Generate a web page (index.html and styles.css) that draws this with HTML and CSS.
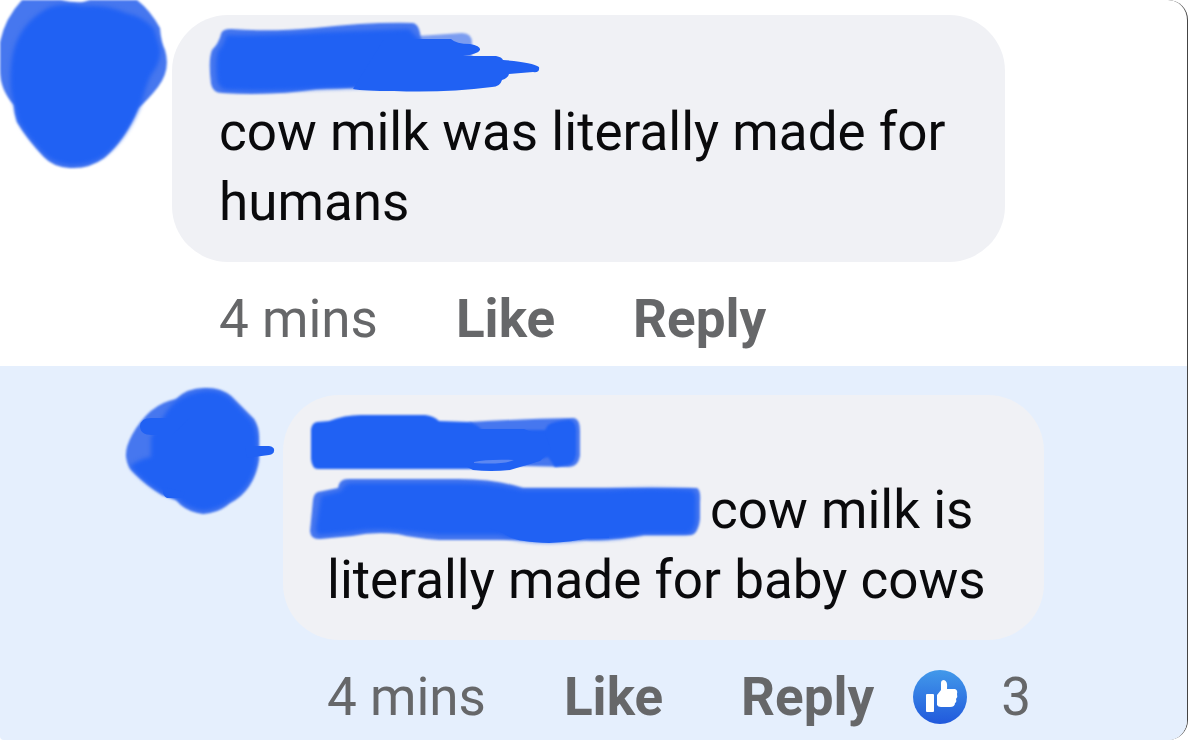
FILE: index.html
```html
<!DOCTYPE html>
<html lang="en">
<head>
    <meta charset="UTF-8">
    <meta name="viewport" content="width=device-width, initial-scale=1.0">
    <title>Comments</title>
    <link rel="stylesheet" href="styles.css">
</head>
<body>
    <main class="thread">
        <!-- Parent comment -->
        <article class="comment">
            <svg class="scribble avatar" width="168" height="170" viewBox="0 0 168 170" aria-hidden="true">
                <path class="soft light" d="M22 0L61 0Q72 3 83 2L90 0H137Q150 10 160 28Q161 42 165 50Q171 70 158 87Q148 100 138 108Q125 140 104 158Q89 169 70 168Q53 167 44 157Q27 139 17 122Q14 113 14 105Q0 90 0 70V42Q5 18 22 0Z"/>
                <path class="blend" d="M50 7Q66 2 82 6Q106 4 126 13Q144 17 154 29L160 48Q162 61 151 75Q146 85 142 101Q127 139 104 156Q88 166 70 165Q54 163 45 155Q25 134 18 120L14 104Q8 87 12 58Q18 23 50 7Z"/>
            </svg>
            <div class="comment-body">
                <div class="bubble">
                    <svg class="scribble name" width="336" height="72" viewBox="0 0 336 72" aria-hidden="true">
                        <path class="soft faint" d="M200 14L258 10Q268 10 268 20V40H200Z"/>
                        <path class="soft light" d="M17 11Q18 6 27 6Q65 9 111 5Q165 -1 208 0Q216 0 217 18L240 36L240 64Q150 64 112 66Q70 73 18 70Q9 70 7 61Q4 37 8 27Q15 20 17 11Z"/>
                        <path class="blend" d="M22 12Q70 13 120 9L205 6L217 18L240 36L240 64Q150 64 112 66Q70 69 25 67Q15 67 13 57Q11 37 14 28Q20 22 22 12Z"/>
                        <path d="M180 16H247Q252 21 266 21Q277 23 276 27Q274 31 259 33H292Q298 34 299 37Q328 39 335 44Q336 50 329 49L305 51Q304 55 298 57Q296 64 288 64Q240 70 190 68Q160 68 149 66Z"/>
                    </svg>
                    <p class="text">cow milk was literally made for humans</p>
                </div>
                <div class="actions">
                    <span class="time">4 mins</span>
                    <button type="button">Like</button>
                    <button type="button">Reply</button>
                </div>
            </div>
        </article>

        <!-- Reply -->
        <article class="comment reply">
            <svg class="scribble avatar" width="150" height="128" viewBox="0 0 150 128" aria-hidden="true">
                <path class="soft light" d="M1 70Q0 61 7 48Q24 17 51 12Q62 1 79 1Q95 0 106 9L129 32Q134 40 134 50V72Q129 104 105 116Q94 126 78 127Q61 125 51 113L37 108Q22 99 9 86Q2 80 1 70Z"/>
                <path class="blend" d="M5 79Q15 72 26 70V50L42 24Q53 8 78 4Q94 2 105 11L127 34Q133 43 132 60V74Q127 101 104 114Q94 122 79 124Q62 122 53 112L39 107Q16 94 5 79Z"/>
                <path d="M26 31H65L47 48H27Q15 48 15 39Q16 31 26 31ZM38 100L60 105L58 111H42Q37 109 38 100ZM120 59H144Q150 60 149 64Q149 67 144 68L122 71Z"/>
            </svg>
            <div class="comment-body">
                <div class="bubble">
                    <svg class="scribble name" width="272" height="58" viewBox="0 0 272 58" aria-hidden="true">
                        <path class="soft light" d="M160 7Q211 4 265 3Q271 4 271 16V41Q269 52 260 52L170 50Z"/>
                        <path class="soft" d="M8 7L20 6Q35 0 52 0H116Q125 1 130 6L160 7Q169 10 173 15L236 15L239 10Q245 6 260 5Q268 6 267 18V39Q266 49 258 50L246 52L239 42L215 50L160 54H9Q3 54 2 44V14Q3 8 8 7Z"/>
                        <path d="M150 14H215Q225 19 236 18L242 35L231 46L201 55Q182 57 164 55L150 48Z"/>
                        <path class="gap" d="M165 47Q178 44 205 45Q194 50 165 48Z"/>
                    </svg>
                    <p class="text"><svg class="scribble mention" width="392" height="62" viewBox="0 5 392 62" aria-hidden="true"><path class="soft light" d="M9 14Q19 12 29 10Q30 1 39 1H150Q186 1 214 10H388Q392 12 391 24V41Q389 56 382 57H335Q296 63 275 62H130Q105 60 89 56Q65 53 43 58L11 61Q2 62 1 53L4 22Q5 15 9 14Z"/><path class="blend" d="M12 18L32 13Q35 5 43 5H150Q186 5 214 12H298Q345 9 382 12Q388 13 387 25V44Q385 55 377 56H335Q305 63 278 61Q243 67 210 62Q198 59 190 57H130L89 53Q65 50 43 54L11 57Q6 56 7 48Z"/><path d="M180 50L194 55Q203 64 240 65Q265 64 278 60H300V50Z"/></svg>cow milk is literally made for baby cows</p>
                </div>
                <div class="actions">
                    <span class="time">4 mins</span>
                    <button type="button">Like</button>
                    <button type="button">Reply</button>
                    <span class="reactions">
                        <svg width="56" height="56" viewBox="0 0 56 56" role="img" aria-label="Likes">
                            <defs>
                                <linearGradient id="likeFill" x1="0" y1="0" x2="0" y2="1">
                                    <stop offset="0" stop-color="#4299ea"/>
                                    <stop offset="1" stop-color="#2159dc"/>
                                </linearGradient>
                            </defs>
                            <circle cx="28" cy="28" r="27" fill="url(#likeFill)"/>
                            <rect x="14" y="25" width="8" height="18" rx="1" fill="#fff"/>
                            <path d="M25 26L29 21V14Q29 11 32 11Q36 12 35 20H43Q46 21 45 25Q46 28 44 30Q45 33 43 34Q43 38 38 38H29Q26 38 25 36Z" fill="#fff"/>
                        </svg>
                        <span>3</span>
                    </span>
                </div>
            </div>
        </article>
    </main>
</body>
</html>
```

FILE: styles.css
```css
* {
    box-sizing: border-box;
}

body {
    margin: 0;
    font-family: Roboto, 'Liberation Sans', sans-serif;
    background-color: #fff;
}

.thread {
    display: flex;
    flex-direction: column;
    min-height: 100vh;
    border-right: 1px solid #444;
    border-radius: 0 20px 20px 4px;
    overflow: hidden;
}

.comment {
    display: flex;
    align-items: flex-start;
    gap: 4px;
    padding-right: 182px;
    padding-bottom: 11px;
}

.comment-body {
    flex: 1;
    padding-top: 15px;
}

.avatar {
    flex: none;
}

/* Marker strokes over names and photos */
.scribble {
    fill: #2061f3;
    overflow: visible;
}

.soft {
    filter: blur(1px);
}

.blend {
    filter: blur(2px);
}

.light {
    fill: #4677ef;
}

.faint {
    fill: #7c9df0;
}

.gap {
    fill: #5b87f2;
}

.bubble {
    padding: 8px 36px 25px 47px;
    border-radius: 56px;
    background-color: #f0f1f5;
}

.name {
    display: block;
    margin: 0 0 2px -15px;
}

.text {
    margin: 0;
    font-size: 53px;
    line-height: 70px;
    color: #0a0a0c;
}

.mention {
    margin: 0 9px 0 -18px;
    vertical-align: middle;
}

.actions {
    display: flex;
    align-items: center;
    gap: 78px;
    height: 93px;
    padding: 20px 0 0 47px;
    font-size: 53px;
    line-height: 70px;
    color: #666769;
    white-space: nowrap;
}

.actions button {
    padding: 0;
    border: none;
    background: none;
    color: inherit;
    font: inherit;
    font-weight: bold;
    cursor: pointer;
}

.reactions {
    display: flex;
    align-items: center;
    gap: 33px;
    margin-left: -40px;
}

.reply {
    flex: 1;
    gap: 8px;
    padding: 21px 143px 0 125px;
    background-color: #e5effd;
}

.reply .comment-body {
    padding-top: 8px;
}

.reply .bubble {
    padding: 20px 36px 25px 44px;
}

.reply .name {
    margin-left: -18px;
}

.reply .actions {
    padding-left: 44px;
}
```
